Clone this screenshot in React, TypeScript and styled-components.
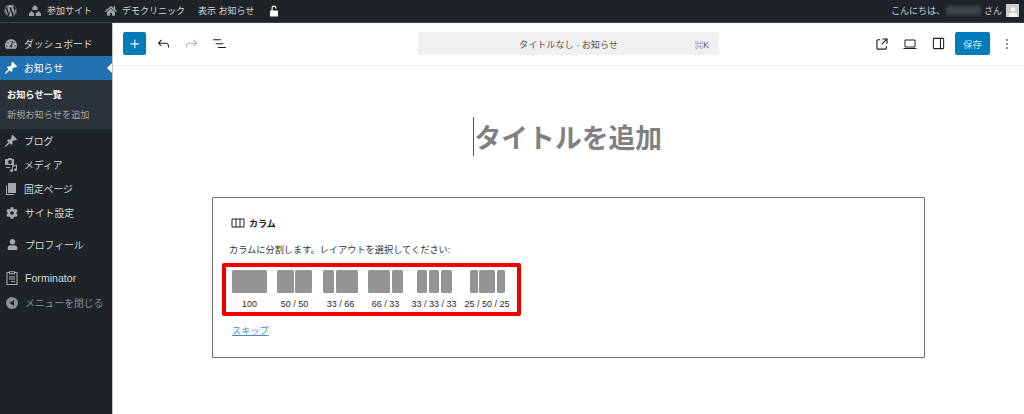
import React from "react";
import styled, { createGlobalStyle } from "styled-components";
import { FaWordpress, FaCog, FaUser, FaHome, FaTachometerAlt } from "react-icons/fa";

const Global = createGlobalStyle`
  html, body { margin: 0; padding: 0; height: 414px; overflow: hidden; background: #fff; }
  body { font-family: "Liberation Sans", "Noto Sans CJK JP", sans-serif; }
  * { box-sizing: border-box; }
`;

const Page = styled.div`
  width: 1024px; height: 414px; display: flex; flex-direction: column; overflow: hidden;
`;
const AdminBar = styled.header`
  height: 23px; flex: none; background: #1d2327; color: #d4d6d8; font-size: 9px;
  display: flex; align-items: center; padding-bottom: 1px;
  border-bottom: 1px solid #3c4347;
`;
const BarIcon = styled.span<{ $left: number; $w: number }>`
  display: inline-flex; width: ${p => p.$w}px; margin-left: ${p => p.$left}px; flex: none;
  align-items: center; justify-content: center; color: #9ea3a8;
`;
const BarText = styled.span<{ $left: number }>`
  margin-left: ${p => p.$left}px; white-space: nowrap; letter-spacing: 0; line-height: 14px;
`;
const Greeting = styled.div`
  margin-left: auto; display: flex; align-items: center; padding-right: 5px; color: #c8cacc; font-size: 9px;
`;
const BlurName = styled.span`
  width: 35px; height: 9px; background: #3d4449; filter: blur(1.5px); margin: 0 3px 0 1px;
`;
const Avatar = styled.span`
  width: 13px; height: 13px; margin-left: 4px; background: #c9cbcc; display: flex; align-items: flex-end; justify-content: center; overflow: hidden;
`;
const Body = styled.div`
  flex: 1; display: flex; min-height: 0;
`;
const Side = styled.nav`
  width: 113px; flex: none; background: #1d2327; border-right: 1px solid #c5c7c9; padding-top: 9px;
  font-size: 9.8px; color: #d6d8d9;
`;
const Item = styled.div<{ $active?: boolean; $top?: number; $h?: number; $dim?: boolean; $ix?: number }>`
  position: relative; display: flex; align-items: center;
  height: ${p => p.$h ?? 24}px; margin-top: ${p => p.$top ?? 0}px; padding-bottom: 1px;
  background: ${p => (p.$active ? "#2271b1" : "transparent")};
  color: ${p => (p.$active ? "#fff" : p.$dim ? "#8c9094" : "#d6d8d9")};
  padding-left: ${p => p.$ix ?? 4}px; gap: 6px; white-space: nowrap;
  ${p => p.$active && `
    &::after {
      content: ""; position: absolute; right: 0; top: 50%; margin-top: -5px;
      border: 5px solid transparent; border-right-color: #fff; border-left-width: 0;
    }
  `}
`;
const SideIcon = styled.span<{ $dim?: boolean; $on?: boolean }>`
  width: 14px; height: 14px; flex: none; display: flex; align-items: center; justify-content: center;
  color: ${p => (p.$on ? "#fff" : p.$dim ? "#8c9094" : "#a7aaad")};
`;
const LatinLabel = styled.span`
  font-size: 10.6px;
`;
const Sub = styled.div`
  background: #2c3338; height: 49px; padding: 5px 0 0 7px; font-size: 9.2px; color: #a2a6a9;
  display: flex; flex-direction: column;
`;
const SubRow = styled.div<{ $on?: boolean }>`
  height: 20px; line-height: 20px; color: ${p => (p.$on ? "#fff" : "#a2a6a9")}; font-weight: ${p => (p.$on ? 700 : 400)};
  white-space: nowrap;
`;
const Main = styled.main`
  flex: 1; display: flex; flex-direction: column; min-width: 0; background: #fff;
`;
const Toolbar = styled.div`
  height: 43px; flex: none; border-bottom: 1px solid #ececec; padding-bottom: 1px;
  display: grid; grid-template-columns: 305px 301px 1fr; align-items: center;
`;
const ToolLeft = styled.div`
  display: flex; align-items: center; padding-left: 10px; height: 100%;
`;
const PlusBtn = styled.button`
  width: 23px; height: 23px; border: 0; border-radius: 2px; background: #007cba; color: #fff; padding: 0;
  display: flex; align-items: center; justify-content: center; margin-right: 3px;
`;
const ToolIcon = styled.span<{ $faded?: boolean; $w?: number }>`
  display: flex; align-items: center; justify-content: center; width: ${p => p.$w ?? 28}px; height: 23px;
  color: ${p => (p.$faded ? "#b4b4b4" : "#1e1e1e")}; flex: none;
`;
const Search = styled.div`
  height: 23px; background: #f0f0f0; border-radius: 3px; position: relative;
  display: flex; align-items: center; justify-content: center; font-size: 9.1px; color: #555;
`;
const Shortcut = styled.span`
  position: absolute; right: 10px; top: 50%; transform: translateY(-50%); font-size: 8.5px; color: #555;
`;
const ToolRight = styled.div`
  display: flex; align-items: center; justify-content: flex-end; padding-right: 4px;
`;
const SaveBtn = styled.button`
  width: 35px; height: 23px; border: 0; border-radius: 2px; background: #007cba; color: #cfe5f1; padding: 0;
  font: inherit; font-size: 9.5px; margin: 0 4px 0 3px;
`;
const Canvas = styled.div`
  flex: 1; display: flex; flex-direction: column; align-items: center; padding-top: 50px; min-height: 0;
`;
const TitleRow = styled.div`
  width: 713px; height: 40px; margin-bottom: 41px; padding-right: 2px; display: flex; justify-content: center; align-items: center;
`;
const Title = styled.h1`
  margin: 0; font-size: 26.8px; font-weight: 700; color: #808080; border-left: 1px solid #555; line-height: 39px; padding-left: 1px; width: 190px; white-space: nowrap;
  font-family: "Noto Sans CJK JP", sans-serif;
`;
const Card = styled.section`
  width: 713px; height: 161px; border: 1px solid #6e6e6e; border-radius: 1px; padding: 16px 10px 0 9px; color: #1e1e1e;
`;
const CardHead = styled.div`
  display: flex; align-items: center; gap: 4px; height: 18px; font-size: 9px; font-weight: 700; padding-left: 9px; color: #222;
`;
const Hint = styled.p`
  margin: 11px 0 6px 7px; font-size: 9.2px; line-height: 14px; color: #333;
`;
const Picker = styled.div`
  width: 299px; height: 53px; border: 4px solid #f20000; border-radius: 2px; display: flex; padding-top: 3px;
`;
const Opt = styled.div<{ $w: number; $left: number }>`
  width: ${p => p.$w}px; margin-left: ${p => p.$left}px; flex: none; display: flex; flex-direction: column; align-items: center;
`;
const Bars = styled.div`
  width: 35px; height: 23px; display: flex; gap: 1.5px;
`;
const Bar = styled.div<{ $f: number }>`
  flex: ${p => p.$f}; background: #949494; border-radius: 1.5px;
`;
const OptLabel = styled.div`
  margin-top: 5px; font-size: 9px; line-height: 12px; color: #2a2a2a; white-space: nowrap;
`;
const Skip = styled.a`
  display: inline-block; margin: 9px 0 0 10px; font-size: 9.2px; line-height: 13px; color: #3f8fc0; text-decoration: underline;
`;

const Svg = ({ d, size = 18, vb = 24 }: { d: string; size?: number; vb?: number }) => (
  <svg width={size} height={size} viewBox={`0 0 ${vb} ${vb}`} fill="currentColor"><path d={d} /></svg>
);

const PIN = "M10.44 3.02l1.82-1.82 6.36 6.35-1.83 1.82c-1.05-.68-2.48-.57-3.41.36l-.75.75c-.92.93-1.04 2.35-.35 3.41l-1.83 1.82-2.41-2.41-2.8 2.79c-.42.42-3.38 2.71-3.8 2.29s1.86-3.39 2.28-3.81l2.79-2.79L4.1 9.36l1.83-1.82c1.05.69 2.48.57 3.4-.36l.75-.75c.93-.92 1.05-2.35.36-3.41z";

const options: { label: string; bars: number[]; w: number; left: number }[] = [
  { label: "100", bars: [1], w: 35, left: 6 },
  { label: "50 / 50", bars: [1, 1], w: 35, left: 10 },
  { label: "33 / 66", bars: [1, 2], w: 35, left: 11 },
  { label: "66 / 33", bars: [2, 1], w: 35, left: 10 },
  { label: "33 / 33 / 33", bars: [1, 1, 1], w: 46, left: 8 },
  { label: "25 / 50 / 25", bars: [1, 2, 1], w: 46, left: 7 },
];

export default function App() {
  return (
    <Page>
      <Global />
      <AdminBar>
        <BarIcon $left={3} $w={15}><FaWordpress size={13} /></BarIcon>
        <BarIcon $left={10} $w={14}>
          <svg width="14" height="12" viewBox="0 0 14 12" fill="currentColor">
            <path d="M7 0l2.6 2.4V5H4.4V2.4zM3.6 6l2.6 2.4V11H1V8.4zM10.4 6L13 8.4V11H7.8V8.4z" />
          </svg>
        </BarIcon>
        <BarText $left={5}>参加サイト</BarText>
        <BarIcon $left={13} $w={12}><FaHome size={12} /></BarIcon>
        <BarText $left={5}>デモクリニック</BarText>
        <BarText $left={13}>表示 お知らせ</BarText>
        <BarIcon $left={15} $w={10}>
          <svg width="10" height="12" viewBox="0 0 10 12" fill="#fff">
            <path d="M1 5.5h8V11.5H1zM2.5 5.5V3a2.5 2.5 0 0 1 5 0v.5H6.3V3a1.3 1.3 0 0 0-2.6 0v2.5z" />
          </svg>
        </BarIcon>
        <Greeting>
          こんにちは、<BlurName />さん
          <Avatar><FaUser size={10} color="#f4f4f4" /></Avatar>
        </Greeting>
      </AdminBar>
      <Body>
        <Side>
          <Item>
            <SideIcon><FaTachometerAlt size={12} /></SideIcon>ダッシュボード
          </Item>
          <Item $active>
            <SideIcon $on><Svg d={PIN} size={14} vb={20} /></SideIcon>お知らせ
          </Item>
          <Sub>
            <SubRow $on>お知らせ一覧</SubRow>
            <SubRow>新規お知らせを追加</SubRow>
          </Sub>
          <Item>
            <SideIcon><Svg d={PIN} size={14} vb={20} /></SideIcon>ブログ
          </Item>
          <Item>
            <SideIcon>
              <svg width="14" height="14" viewBox="0 0 14 14" fill="currentColor">
                <path d="M1 1h3l.6-1h2.8l.6 1h2v6H1zM6 2a2 2 0 1 0 0 4 2 2 0 0 0 0-4zM2 9v1h4V9zM13 6.5v5.2a1.5 1.3 0 1 1-1-1.2V8l-3 .6v4a1.5 1.3 0 1 1-1-1.2V7.6z" />
              </svg>
            </SideIcon>
            メディア
          </Item>
          <Item>
            <SideIcon>
              <svg width="14" height="14" viewBox="0 0 14 14" fill="currentColor">
                <path d="M4 1h8v10H4zM2 3.5h1V12h7v1H2z" />
              </svg>
            </SideIcon>
            固定ページ
          </Item>
          <Item $ix={5}>
            <SideIcon><FaCog size={12} /></SideIcon>サイト設定
          </Item>
          <Item $top={8} $ix={5}>
            <SideIcon><FaUser size={11} /></SideIcon>プロフィール
          </Item>
          <Item $top={9} $ix={5}>
            <SideIcon>
              <svg width="12" height="14" viewBox="0 0 12 14" fill="none" stroke="currentColor" strokeWidth="1.1">
                <path d="M3.5 1.5H1v12h10v-12H8.5M3.5.7h5v2h-5zM3 6h6M3 8h6M5 10.5h4" />
              </svg>
            </SideIcon>
            <LatinLabel>Forminator</LatinLabel>
          </Item>
          <Item $dim $top={1} $ix={5}>
            <SideIcon $dim>
              <svg width="12" height="12" viewBox="0 0 12 12">
                <circle cx="6" cy="6" r="6" fill="currentColor" />
                <path d="M8 3v6L3.5 6z" fill="#1d2327" />
              </svg>
            </SideIcon>
            メニューを閉じる
          </Item>
        </Side>
        <Main>
          <Toolbar>
            <ToolLeft>
              <PlusBtn><Svg d="M11 12.5V17.5H12.5V12.5H17.5V11H12.5V6H11V11H6V12.5H11Z" size={18} /></PlusBtn>
              <ToolIcon><Svg d="M18.3 11.7c-.6-.6-1.4-.9-2.3-.9H6.7l2.9-3.3-1.1-1-4.5 5L8.5 16l1-1-2.7-2.7H16c.5 0 .9.2 1.3.5 1 1 1 3.4 1 4.5v.3h1.5v-.2c0-1.5 0-4.3-1.5-5.7z" size={17} /></ToolIcon>
              <ToolIcon $faded><Svg d="M15.6 6.5l-1.1 1 2.9 3.3H8c-.9 0-1.7.3-2.3.9-1.4 1.5-1.4 4.2-1.4 5.6v.2h1.5v-.3c0-1.1 0-3.5 1-4.5.3-.3.7-.5 1.3-.5h9.2L14.5 15l1.1 1.1 4.6-4.6-4.6-5z" size={17} /></ToolIcon>
              <ToolIcon><Svg d="M3 6h11v1.5H3V6Zm3.5 5.5h11V13h-11v-1.5ZM21 17H10v1.5h11V17Z" size={17} /></ToolIcon>
            </ToolLeft>
            <Search>
              タイトルなし · お知らせ
              <Shortcut>⌘K</Shortcut>
            </Search>
            <ToolRight>
              <ToolIcon><Svg d="M19.5 4.5h-7V6h4.44l-5.97 5.97 1.06 1.06L18 7.06v4.44h1.5v-7Zm-13 1a2 2 0 0 0-2 2v10a2 2 0 0 0 2 2h10a2 2 0 0 0 2-2v-3H17v3a.5.5 0 0 1-.5.5h-10a.5.5 0 0 1-.5-.5v-10a.5.5 0 0 1 .5-.5h3V5.5h-3Z" size={18} /></ToolIcon>
              <ToolIcon>
                <svg width="16" height="16" viewBox="0 0 16 16" fill="none" stroke="currentColor" strokeWidth="1">
                  <path d="M3 4h10v7H3zM1.5 12.5h13" />
                </svg>
              </ToolIcon>
              <ToolIcon><Svg d="M18 4H6c-1.1 0-2 .9-2 2v12c0 1.1.9 2 2 2h12c1.1 0 2-.9 2-2V6c0-1.1-.9-2-2-2zm-4 14.5H6c-.3 0-.5-.2-.5-.5V6c0-.3.2-.5.5-.5h8v13zm4.5-.5c0 .3-.2.5-.5.5h-2.5v-13H18c.3 0 .5.2.5.5v12z" size={17} /></ToolIcon>
              <SaveBtn>保存</SaveBtn>
              <ToolIcon $w={26}><Svg d="M13 19h-2v-2h2v2zm0-6h-2v-2h2v2zm0-6h-2V5h2v2z" size={16} /></ToolIcon>
            </ToolRight>
          </Toolbar>
          <Canvas>
            <TitleRow><Title>タイトルを追加</Title></TitleRow>
            <Card>
              <CardHead>
                <svg width="14" height="14" viewBox="0 0 14 14" fill="none" stroke="#1e1e1e" strokeWidth="1">
                  <path d="M1 3h12v8H1zM5 3v8M9 3v8" />
                </svg>
                カラム
              </CardHead>
              <Hint>カラムに分割します。レイアウトを選択してください:</Hint>
              <Picker>
                {options.map(o => (
                  <Opt key={o.label} $w={o.w} $left={o.left}>
                    <Bars>{o.bars.map((f, i) => <Bar key={i} $f={f} />)}</Bars>
                    <OptLabel>{o.label}</OptLabel>
                  </Opt>
                ))}
              </Picker>
              <Skip>スキップ</Skip>
            </Card>
          </Canvas>
        </Main>
      </Body>
    </Page>
  );
}
